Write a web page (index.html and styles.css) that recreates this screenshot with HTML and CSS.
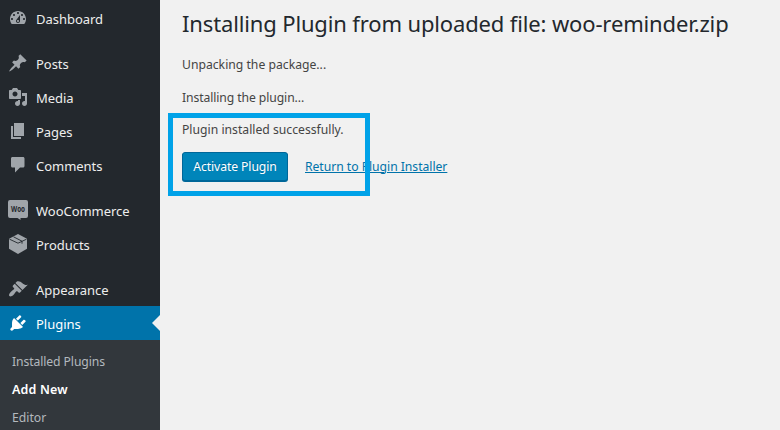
FILE: index.html
```
<!DOCTYPE html>
<html lang="en">
<head>
<meta charset="utf-8">
<title>Installing Plugin</title>
<link rel="stylesheet" href="styles.css">
</head>
<body>
<div class="layout">
  <nav class="sidebar">
    <ul class="menu">
      <li class="item"><svg class="icon" viewBox="0 0 20 20"><path d="M3.76 16h12.48c1.1-1.37 1.76-3.11 1.76-5 0-4.42-3.58-8-8-8s-8 3.58-8 8c0 1.89.66 3.63 1.76 5zM10 4c.55 0 1 .45 1 1s-.45 1-1 1-1-.45-1-1 .45-1 1-1zM6 6c.55 0 1 .45 1 1s-.45 1-1 1-1-.45-1-1 .45-1 1-1zm8 0c.55 0 1 .45 1 1s-.45 1-1 1-1-.45-1-1 .45-1 1-1zm-5.37 5.55L12 7v6c0 1.1-.9 2-2 2s-2-.9-2-2c0-.57.24-1.08.63-1.45zM4 10c.55 0 1 .45 1 1s-.45 1-1 1-1-.45-1-1 .45-1 1-1zm12 0c.55 0 1 .45 1 1s-.45 1-1 1-1-.45-1-1 .45-1 1-1zm-5 3c0-.55-.45-1-1-1s-1 .45-1 1 .45 1 1 1 1-.45 1-1z"/></svg><span class="label">Dashboard</span></li>
      <li class="item spaced"><svg class="icon" viewBox="0 0 20 20"><path d="M10.44 3.02l1.82-1.82 6.36 6.35-1.83 1.82c-1.05-.68-2.48-.57-3.41.36l-.75.75c-.92.93-1.04 2.35-.35 3.41l-1.83 1.82-2.41-2.41-2.8 2.79c-.42.42-3.38 2.71-3.8 2.29s1.86-3.39 2.28-3.81l2.79-2.79L4.1 9.36l1.83-1.82c1.05.69 2.48.57 3.4-.36l.75-.75c.93-.92 1.05-2.35.36-3.41z"/></svg><span class="label">Posts</span></li>
      <li class="item"><svg class="icon" viewBox="0 0 20 20"><path d="M13 11V4c0-.55-.45-1-1-1h-1.67L9 1H5L3.67 3H2c-.55 0-1 .45-1 1v7c0 .55.45 1 1 1h10c.55 0 1-.45 1-1zM7 4.5c1.38 0 2.5 1.12 2.5 2.5S8.38 9.5 7 9.5 4.5 8.38 4.5 7 5.62 4.5 7 4.5zM14 6h5v10.5c0 1.38-1.12 2.5-2.5 2.5S14 17.88 14 16.5s1.12-2.5 2.5-2.5c.17 0 .34.02.5.05V9h-3V6zm-4 8.05V13h2v3.5c0 1.38-1.12 2.5-2.5 2.5S7 17.88 7 16.5 8.12 14 9.5 14c.17 0 .34.02.5.05z"/></svg><span class="label">Media</span></li>
      <li class="item"><svg class="icon" viewBox="0 0 20 20"><path d="M6 15V2h10v13H6zm-1 1h8v2H3V5h2v11z"/></svg><span class="label">Pages</span></li>
      <li class="item"><svg class="icon" viewBox="0 0 20 20"><path d="M4.5 2h10.5c.9 0 1.500.6 1.500 1.500v7.500c0 .9-.6 1.500-1.500 1.500h-3L7 17.500v-5H4.500C3.600 12.500 3 11.900 3 11V3.500C3 2.600 3.600 2 4.500 2z"/></svg><span class="label">Comments</span></li>
      <li class="item spaced"><svg class="icon" viewBox="0 0 20 20"><path d="M2 0h16a2 2 0 0 1 2 2v14a2 2 0 0 1-2 2h-5.500v2l-3-2H2a2 2 0 0 1-2-2V2a2 2 0 0 1 2-2z"/><text class="woo" x="3" y="12" textLength="14" lengthAdjust="spacingAndGlyphs">Woo</text></svg><span class="label">WooCommerce</span></li>
      <li class="item"><svg class="icon" viewBox="0 0 20 20"><path d="M10 0l9 4.800v10L10 20l-9-5.200v-10z"/><path class="seam" d="M1.500 5.200L10 9.200l8.500-4M5.500 2.800l8.500 4.400v2.500"/></svg><span class="label">Products</span></li>
      <li class="item spaced"><svg class="icon" viewBox="0 0 20 20"><path d="M14.48 11.06L7.41 3.99l1.5-1.5c.5-.56 2.3-.47 3.51.32 1.21.8 1.43 1.28 2.91 2.1 1.18.64 2.45 1.26 4.45.85zm-.71.71L6.7 4.7 4.93 6.47c-.39.39-.39 1.02 0 1.41l1.06 1.06c.39.39.39 1.03 0 1.42-.6.6-1.43 1.11-2.21 1.69-.35.26-.7.53-1.01.84C1.43 14.23.4 16.08 1.4 17.07c.99 1 2.84-.03 4.18-1.36.31-.31.58-.66.85-1.02.57-.78 1.08-1.61 1.69-2.21.39-.39 1.02-.39 1.41 0l1.06 1.06c.39.39 1.02.39 1.41 0z"/></svg><span class="label">Appearance</span></li>
      <li class="item current"><svg class="icon" viewBox="0 0 20 20"><path d="M13.11 4.36L9.87 7.6 8 5.73l3.24-3.24c.35-.34 1.05-.2 1.56.32.52.51.66 1.21.31 1.55zm-8 1.77l.91-1.12 9.01 9.01-1.19.84c-.71.71-2.63 1.16-3.82 1.16H6.14L4.9 17.26c-.59.59-1.54.59-2.12 0-.59-.58-.59-1.53 0-2.12l1.24-1.24v-3.88c0-1.13.4-3.19 1.09-3.89zm7.26 3.97l3.24-3.24c.34-.35 1.04-.21 1.55.31.52.51.66 1.21.31 1.55l-3.24 3.25z"/></svg><span class="label">Plugins</span></li>
    </ul>
    <ul class="submenu">
      <li class="installed">Installed Plugins</li>
      <li class="active">Add New</li>
      <li>Editor</li>
    </ul>
  </nav>
  <main class="content">
    <h1>Installing Plugin from uploaded file: woo-reminder.zip</h1>
    <p class="p1">Unpacking the package...</p>
    <p class="p2">Installing the plugin...</p>
    <div class="result">
      <p>Plugin installed successfully.</p>
      <div class="actions">
        <a class="button">Activate Plugin</a>
        <a class="link">Return to Plugin Installer</a>
      </div>
      <div class="highlight"></div>
    </div>
  </main>
</div>
</body>
</html>
```
FILE: styles.css
```
* { box-sizing: border-box; }
body {
  margin: 0;
  background: #f1f1f1;
  color: #444;
  font: 12.2px/20px "Noto Sans", "Open Sans", sans-serif;
}
ul { margin: 0; padding: 0; list-style: none; }
.layout { display: flex; height: 430px; overflow: hidden; }
.sidebar { width: 160px; flex: none; background: #23282d; }
.menu { padding-top: 1px; }
.item {
  display: flex;
  align-items: center;
  height: 34px;
  padding: 0 0 0 8px;
  gap: 8px;
  color: #eee;
  font-size: 13px;
}
.spaced { margin-top: 11px; }
.icon { width: 20px; height: 20px; flex: none; fill: #a0a5aa; overflow: visible; }
.label { padding-top: 2px; letter-spacing: -0.03px; }
.woo { font: bold 9px "Open Sans", sans-serif; fill: #23282d; }
.seam { fill: none; stroke: #23282d; stroke-width: 0.9; }
.current { background: #0073aa; color: #fff; }
.current .icon { fill: #fff; }
.current::after {
  content: "";
  margin-left: auto;
  border: 8px solid transparent;
  border-left-width: 0;
  border-right-color: #f1f1f1;
}
.submenu { height: 100px; padding: 8px 12px; background: #32373c; color: #b4b9be; line-height: 28px; }
.installed { letter-spacing: -0.1px; }
.active { color: #fff; font-weight: 600; font-size: 12.5px; letter-spacing: 0.15px; }
.content { flex: 1; padding: 8px 0 0 22px; }
h1 { margin: 0; color: #23282d; font-size: 22px; font-weight: 400; line-height: 30px; letter-spacing: -0.14px; white-space: nowrap; }
p { margin: 0; }
.p1 { margin-top: 17px; }
.p2 { margin-top: 13px; letter-spacing: -0.1px; }
.result { position: relative; margin-top: 12px; }
.actions { display: flex; align-items: center; gap: 17px; margin-top: 12px; }
.button {
  width: 106px;
  height: 29px;
  border: 1px solid #006799;
  border-radius: 3px;
  background: #0085ba;
  color: #fff;
  line-height: 27px;
  letter-spacing: -0.1px;
  text-align: center;
  text-shadow: 0 -1px 1px #006799;
  box-shadow: 0 1px 0 #006799;
}
.link { color: #0073aa; text-decoration: underline; letter-spacing: -0.04px; }
.highlight { position: absolute; left: -14px; top: -7px; width: 202px; height: 83px; border: 5px solid #00a2e8; }
```
